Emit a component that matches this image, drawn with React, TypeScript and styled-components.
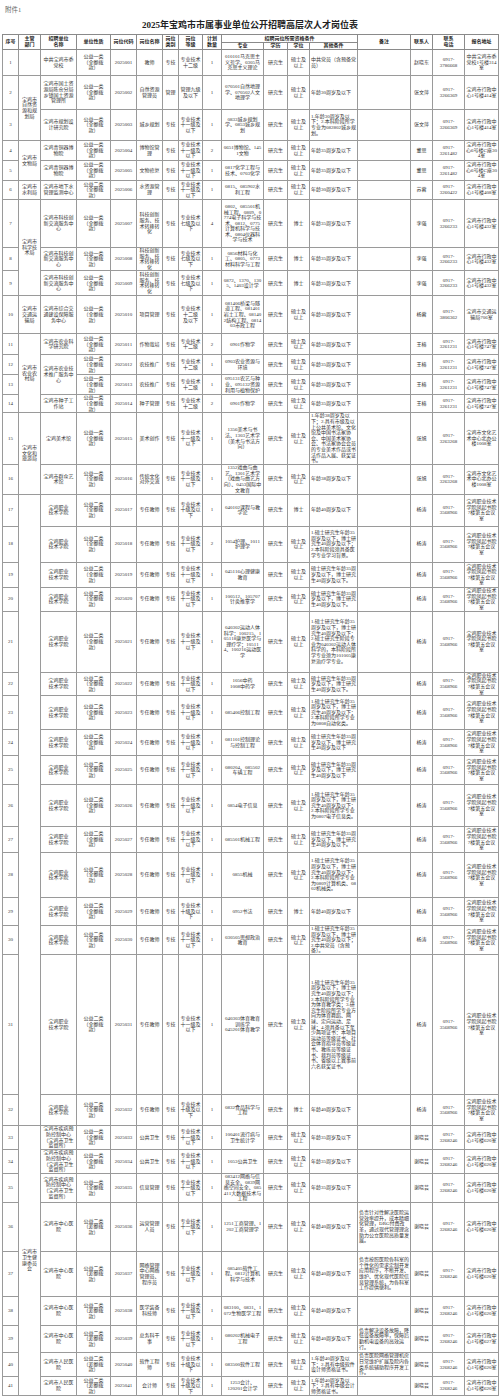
import React from "react";
import styled, { createGlobalStyle } from "styled-components";

const GlobalStyle = createGlobalStyle`
  body {
    margin: 0;
    background: #ffffff;
    font-family: "Liberation Serif", "Noto Sans CJK SC", serif;
  }
`;

const Page = styled.div`
  width: 500px;
  padding: 4px 0 0 0;
  box-sizing: border-box;
`;

const Attach = styled.div`
  height: 12px;
  padding-left: 5px;
  font-size: 6.5px;
  line-height: 12px;
  color: #666666;
`;

const Title = styled.h1`
  margin: 0;
  height: 18px;
  font-size: 9px;
  line-height: 18px;
  font-weight: 700;
  text-align: center;
  color: #222222;
`;

const Table = styled.table`
  width: 496px;
  margin-left: 2px;
  border-collapse: collapse;
  table-layout: fixed;
  font-size: 5px;
  line-height: 5.6px;
  color: #333333;
  border: 1px solid #777777;
`;

const HeadRow = styled.tr<{ $h: number }>`
  height: ${(p) => p.$h}px;
`;

const BodyRow = styled.tr<{ $h: number }>`
  height: ${(p) => p.$h}px;
`;

const Th = styled.th`
  border: 1px solid #8a8a8a;
  padding: 0 1px;
  font-weight: 700;
  text-align: center;
  vertical-align: middle;
  color: #222222;
  white-space: pre-line;
`;

const Td = styled.td<{ $left?: boolean }>`
  border: 1px solid #9a9a9a;
  padding: 0 1px;
  text-align: ${(p) => (p.$left ? "left" : "center")};
  vertical-align: middle;
  white-space: pre-line;
  word-break: break-all;
  overflow: hidden;
`;

type Row = {
  h: number;
  dept?: string | null;
  deptSpan?: number;
  unit: string | null;
  unitSpan?: number;
  nature: string;
  code: string;
  post: string;
  kind?: string;
  level: string;
  count: number;
  major: string;
  edu?: string;
  degree: string;
  other: string;
  note?: string;
  contact: string;
  phone: string;
  addr: string;
};

const P1 = "公益一类\n（全额拨\n款）";
const P2 = "公益二类\n（全额拨\n款）";
const P2C = "公益二类\n（差额拨\n款）";
const L11 = "专业技术\n十一级及\n以下";
const L10 = "专业技术\n十级及以\n下";
const L12 = "专业技术\n十二级";
const SS = "硕士及\n以上";
const AGE35 = "年龄35周岁及以下";
const AGE40 = "年龄40周岁及以下";
const YJ = "硕士研究生年龄35周岁及以下，博士研究生40周岁及以下";
const CDC = "宝鸡市疾病预\n防控制中心\n（宝鸡市卫生\n监督所）";

const college = {
  unit: "宝鸡职业\n技术学院",
  nature: P2,
  post: "专任教师",
  contact: "杨涛",
  phone: "0917-\n3568966",
  addr: "宝鸡职业技术学院凤起书院7楼第五会议室",
};

const health = {
  contact: "谢晓芸",
  phone: "0917-\n3268246",
  addr: "宝鸡市行政中心1号楼620室",
};

const rows: Row[] = [
  { h: 26, unit: "中共宝鸡市委\n党校", nature: P1, code: "2025001", post: "教师", level: "专业技术\n十二级", count: 1, major: "010101马克思主义哲学、0305马克思主义理论", degree: SS, other: "中共党员（含预备党员）", contact: "赵晓东", phone: "0917-\n3786668", addr: "中共宝鸡市委党校1号楼314室" },
  { h: 34, dept: "宝鸡市自然资源和规划局", deptSpan: 2, unit: "宝鸡市国土资源局陈仓分局乡镇国土资源管理所", nature: P1, code: "2025002", post: "自然资源管理员", kind: "管理", level: "管理九级及以下", count: 1, major: "070501自然地理学、070502人文地理学", degree: SS, other: "年龄30周岁及以下", contact: "张文萍", phone: "0917-\n3266369", addr: "宝鸡市行政中心1号楼414室" },
  { h: 31, dept: null, unit: "宝鸡市规划设计研究院", nature: P1, code: "2025003", post: "城乡规划", level: L11, count: 1, major: "0833城乡规划学、0853城乡规划", degree: SS, other: "1.年龄30周岁及以下；2.本科阶段所学专业为082802城乡规划。", contact: "张文萍", phone: "0917-\n3266369", addr: "宝鸡市行政中心1号楼414室" },
  { h: 20, dept: "宝鸡市文物局", deptSpan: 2, unit: "宝鸡青铜器博\n物院", nature: P1, code: "2025004", post: "博物馆管理", level: L11, count: 2, major: "0651博物馆、1451文物", degree: SS, other: AGE35, contact: "董思", phone: "0917-\n3261482", addr: "宝鸡市行政中心6号楼C座304室" },
  { h: 20, dept: null, unit: "宝鸡青铜器博\n物院", nature: P1, code: "2025005", post: "文物修复", level: L11, count: 1, major: "0817化学工程与技术、0703化学", degree: SS, other: AGE35, contact: "董思", phone: "0917-\n3261482", addr: "宝鸡市行政中心6号楼C座304室" },
  { h: 19, dept: "宝鸡市水利局", deptSpan: 1, unit: "宝鸡市地下水管理监测中心", nature: P2, code: "2025006", post: "水资源管理", level: L11, count: 1, major: "0815、085902水利工程", degree: SS, other: "年龄30周岁及以下", contact: "苏蓉", phone: "0917-\n3260422", addr: "宝鸡市行政中心1号楼408室" },
  { h: 48, dept: "宝鸡市科学技术局", deptSpan: 3, unit: "宝鸡市科技创新交流服务中心", nature: P1, code: "2025007", post: "科技创新服务、技术转移转化", level: "专业技术七级及以下", count: 4, major: "0802、085501机械工程、0809、0774电子科学与技术、0812、0775计算机科学与技术、0804仪器科学与技术", degree: "博士", other: AGE35, contact: "李强", phone: "0917-\n3266233", addr: "宝鸡市行政中心1号楼432室" },
  { h: 23, dept: null, unit: "宝鸡市科技创新交流服务中心", nature: P1, code: "2025008", post: "科技创新服务、技术转移转化", level: "专业技术七级及以下", count: 1, major: "0856材料与化工、0805、0773材料科学与工程", degree: "博士", other: AGE35, contact: "李强", phone: "0917-\n3266233", addr: "宝鸡市行政中心1号楼432室" },
  { h: 25, dept: null, unit: "宝鸡市科技创新交流服务中心", nature: P1, code: "2025009", post: "科技创新服务、技术转移转化", level: "专业技术七级及以下", count: 1, major: "0872、1370、1305、1403设计学", degree: "博士", other: AGE35, contact: "李强", phone: "0917-\n3266233", addr: "宝鸡市行政中心1号楼432室" },
  { h: 38, dept: "宝鸡市交通运输局", deptSpan: 1, unit: "宝鸡市综合交通建设保障服务中心", nature: P1, code: "2025010", post: "项目管理", level: "专业技术\n十二级\n及以下", count: 1, major: "081406桥梁与隧道工程、081401岩土工程、081402结构工程、081403市政工程", degree: SS, other: AGE35, contact: "杨蓉", phone: "0917-\n3806362", addr: "宝鸡市交通运输局706室" },
  { h: 21, dept: "宝鸡市农业农村局", deptSpan: 4, unit: "宝鸡市农业科\n学研究院", nature: P1, code: "2025011", post: "作物栽培", level: L12, count: 2, major: "0901作物学", degree: SS, other: AGE35, contact: "王榕", phone: "0917-\n3261231", addr: "宝鸡市行政中心1号楼747室" },
  { h: 20, dept: null, unit: "宝鸡市农业技术推广服务中心", unitSpan: 2, nature: P1, code: "2025012", post: "农技推广", level: L12, count: 1, major: "0903农业资源与环境", degree: SS, other: AGE35, contact: "王榕", phone: "0917-\n3261231", addr: "宝鸡市行政中心1号楼747室" },
  { h: 20, dept: null, unit: null, nature: P1, code: "2025013", post: "农技推广", level: L12, count: 1, major: "095131农艺与种业、095132资源利用与植物保护", degree: SS, other: AGE35, contact: "王榕", phone: "0917-\n3261231", addr: "宝鸡市行政中心1号楼747室" },
  { h: 18, dept: null, unit: "宝鸡市种子工\n作站", nature: P1, code: "2025014", post: "种子管理", level: L12, count: 2, major: "0901作物学", degree: SS, other: AGE35, contact: "王榕", phone: "0917-\n3261231", addr: "宝鸡市行政中心1号楼747室" },
  { h: 51, dept: "宝鸡市文化和旅游局", deptSpan: 2, unit: "宝鸡美术馆", nature: P1, code: "2025015", post: "美术创作", level: L11, count: 1, major: "1356美术与书法、1303艺术学（美术与书法方向）", degree: SS, other: "1.年龄38周岁及以下；2.具有市级及以上公共美术馆、文化馆及中国书法家协会、中国美术家协会、书法家协会会员的专业美术作品或书法作品入展、获奖证书。", contact: "张旭", phone: "0917-\n3263268", addr: "宝鸡市文化艺术中心北办公楼1008室" },
  { h: 30, dept: null, unit: "宝鸡市群众艺\n术馆", nature: P1, code: "2025016", post: "传统文化对外交流", level: L11, count: 1, major: "1352戏曲与曲艺、1301艺术学（戏曲与曲艺方向）、0453国际中文教育", degree: SS, other: "年龄38周岁及以下", contact: "张旭", phone: "0917-\n3263268", addr: "宝鸡市文化艺术中心北办公楼1008室" },
  { h: 32, dept: "", deptSpan: 16, ...college, code: "2025017", level: L10, count: 1, major: "040102课程与教学论", degree: "博士", other: AGE40 },
  { h: 36, dept: null, ...college, code: "2025018", level: L11, count: 2, major: "1054护理、1011护理学", degree: SS, other: "1.硕士研究生年龄35周岁及以下，博士研究生40周岁及以下；2.本科阶段须具备医学专业学习背景。" },
  { h: 25, dept: null, ...college, code: "2025019", level: L11, count: 1, major: "045116心理健康教育", degree: SS, other: YJ + "。" },
  { h: 24, dept: null, ...college, code: "2025020", level: L11, count: 1, major: "100512、105707针灸推拿学", degree: SS, other: YJ + "。" },
  { h: 61, dept: null, ...college, code: "2025021", level: L11, count: 1, major: "040302运动人体科学；100215、105118康复医学与理疗学；105114、100216运动医学", degree: SS, other: "1.硕士研究生年龄35周岁及以下，博士研究生40周岁及以下；2.硕士研究生阶段专业为040302运动人体科学的，本科阶段所学专业须为101005康复治疗学专业。" },
  { h: 23, dept: null, ...college, code: "2025022", level: L11, count: 1, major: "1056中药\n1008中药学", degree: SS, other: YJ + "。" },
  { h: 34, dept: null, ...college, code: "2025023", level: L11, count: 1, major: "085406控制工程", degree: SS, other: "1.硕士研究生年龄35周岁及以下，博士研究生40周岁及以下；2.本科阶段所学专业为0808自动化类。" },
  { h: 26, dept: null, ...college, code: "2025024", level: L11, count: 1, major: "081101控制理论与控制工程", degree: SS, other: YJ },
  { h: 29, dept: null, ...college, code: "2025025", level: L11, count: 1, major: "080204、085502车辆工程", degree: SS, other: YJ },
  { h: 42, dept: null, ...college, code: "2025026", level: L11, count: 1, major: "0854电子信息", degree: SS, other: "1.硕士研究生年龄35周岁及以下，博士研究生40周岁及以下；2.本科阶段所学专业为0807电子信息类。" },
  { h: 26, dept: null, ...college, code: "2025027", level: L11, count: 1, major: "085501机械工程", degree: SS, other: YJ + "。" },
  { h: 45, dept: null, ...college, code: "2025028", level: L11, count: 1, major: "0855机械", degree: SS, other: "1.硕士研究生年龄35周岁及以下，博士研究生40周岁及以下；2.本科阶段所学专业为0809计算机类、0802机械类。" },
  { h: 28, dept: null, ...college, code: "2025029", level: L10, count: 1, major: "0952书法", degree: "博士", other: AGE40 },
  { h: 29, dept: null, ...college, code: "2025030", level: L11, count: 1, major: "030505思想政治教育", degree: SS, other: "1.硕士研究生年龄35周岁及以下，博士研究生40周岁及以下；2.中共党员（含预备）。" },
  { h: 140, dept: null, ...college, code: "2025031", level: L11, count: 1, major: "040303体育教育训练学\n045201体育教学", degree: SS, other: "1.硕士研究生年龄35周岁及以下，博士研究生40周岁及以下；2.本科阶段所学专业为体育教学类；3.研究生阶段所学专业方向为体育舞蹈、网球、定向运动、足球；4.须具备以下至少两项证书：本项目运动员等级证书、社会体育指导员等级证书、教练员等级证书、裁判员等级证书、省级以上赛事前六名获奖证书。" },
  { h: 31, dept: null, ...college, code: "2025032", level: L10, count: 1, major: "0832食品科学与工程", degree: "博士", other: AGE40 },
  { h: 24, dept: "宝鸡市卫生健康委员会", deptSpan: 9, unit: CDC, nature: P1, code: "2025033", post: "公共卫生", level: L11, count: 1, major: "100401流行病与卫生统计学", degree: SS, other: AGE35, ...health },
  { h: 24, dept: null, unit: CDC, nature: P1, code: "2025034", post: "公共卫生", level: L11, count: 1, major: "1053公共卫生", degree: SS, other: AGE35, ...health },
  { h: 26, dept: null, unit: CDC, nature: P1, code: "2025035", post: "信息管理", level: L11, count: 1, major: "083412网络与信息安全、0839网络空间安全、085411大数据技术与工程", degree: SS, other: AGE35, ...health },
  { h: 49, dept: null, unit: "宝鸡市中心医\n院", nature: P2C, code: "2025036", post: "运营管理\n人员", level: L11, count: 1, major: "1251工商管理、1202工商管理学", degree: SS, other: AGE40, note: "负责针对性解决医院运营效率提升，成本精细化管理，DRG付费改革，通过现代管理理念助力公立医院高质量发展。", ...health },
  { h: 45, dept: null, unit: "宝鸡市中心医\n院", nature: P2C, code: "2025037", post: "网络管理中心网络管理员、程序员", level: L11, count: 1, major: "085405软件工程、0812计算机科学与技术", degree: SS, other: AGE40, note: "负责按照医院各科室的个性化的需求定制开发应用程序，不断开发、维护、优化现代医院信息管理系统，为各科室工作提供便利。", ...health },
  { h: 29, dept: null, unit: "宝鸡市中心医\n院", nature: P2C, code: "2025038", post: "医学装备\n科技师", level: L11, count: 1, major: "083100、0831、1072生物医学工程", degree: SS, other: AGE40, ...health },
  { h: 27, dept: null, unit: "宝鸡市中心医\n院", nature: P2C, code: "2025039", post: "总务科干\n事", level: L11, count: 1, major: "080202机械电子工程", degree: SS, other: AGE40, note: "负责解决设备故障，降低设备故障率，保障后勤机电设备的高效运行。", ...health, addr: "宝鸡市行政中心1号楼627室" },
  { h: 24, dept: null, unit: "宝鸡市人民医\n院", nature: P2C, code: "2025040", post: "软件工程\n师", level: L10, count: 1, major: "083500软件工程", degree: SS, other: "1.年龄40周岁及以下；2.具有中级软件设计师资格证书。", note: "负责医院网络管理机房日常维护扩展及院内各类系统辅助程序开发工作。", ...health },
  { h: 19, dept: null, unit: "宝鸡市人民医\n院", nature: P2C, code: "2025041", post: "会计师", level: L10, count: 1, major: "1253会计、\n120201会计学", degree: SS, other: "1.年龄40周岁及以下；2.具有中级会计师资格证书。", ...health },
];

const widths = [16, 22, 36, 34, 26, 26, 16, 24, 19, 42, 24, 22, 48, 53, 22, 32, 34];

export default function App() {
  return (
    <Page>
      <GlobalStyle />
      <Attach>附件1</Attach>
      <Title>2025年宝鸡市市属事业单位公开招聘高层次人才岗位表</Title>
      <Table>
        <colgroup>
          {widths.map((w, i) => (
            <col key={i} style={{ width: w }} />
          ))}
        </colgroup>
        <thead>
          <HeadRow $h={8}>
            <Th rowSpan={2}>序号</Th>
            <Th rowSpan={2}>{"主管\n部门"}</Th>
            <Th rowSpan={2}>{"招聘单位\n名称"}</Th>
            <Th rowSpan={2}>单位性质</Th>
            <Th rowSpan={2}>岗位代码</Th>
            <Th rowSpan={2}>岗位名称</Th>
            <Th rowSpan={2}>{"岗位\n类别"}</Th>
            <Th rowSpan={2}>{"岗位\n等级"}</Th>
            <Th rowSpan={2}>{"计划\n数量"}</Th>
            <Th colSpan={4}>招聘岗位所需资格条件</Th>
            <Th rowSpan={2}>备注</Th>
            <Th rowSpan={2}>联系人</Th>
            <Th rowSpan={2}>{"联系\n电话"}</Th>
            <Th rowSpan={2}>报名地址</Th>
          </HeadRow>
          <HeadRow $h={7}>
            <Th>专业</Th>
            <Th>学历</Th>
            <Th>学位</Th>
            <Th>其他条件</Th>
          </HeadRow>
        </thead>
        <tbody>
          {rows.map((r, i) => (
            <BodyRow key={r.code} $h={r.h}>
              <Td>{i + 1}</Td>
              {r.dept !== null && <Td rowSpan={r.deptSpan ?? 1}>{r.dept ?? ""}</Td>}
              {r.unit !== null && <Td rowSpan={r.unitSpan ?? 1}>{r.unit}</Td>}
              <Td>{r.nature}</Td>
              <Td>{r.code}</Td>
              <Td>{r.post}</Td>
              <Td>{r.kind ?? "专技"}</Td>
              <Td>{r.level}</Td>
              <Td>{r.count}</Td>
              <Td>{r.major}</Td>
              <Td>{r.edu ?? "研究生"}</Td>
              <Td>{r.degree}</Td>
              <Td $left>{r.other}</Td>
              <Td $left>{r.note ?? ""}</Td>
              <Td>{r.contact}</Td>
              <Td>{r.phone}</Td>
              <Td>{r.addr}</Td>
            </BodyRow>
          ))}
        </tbody>
      </Table>
    </Page>
  );
}
